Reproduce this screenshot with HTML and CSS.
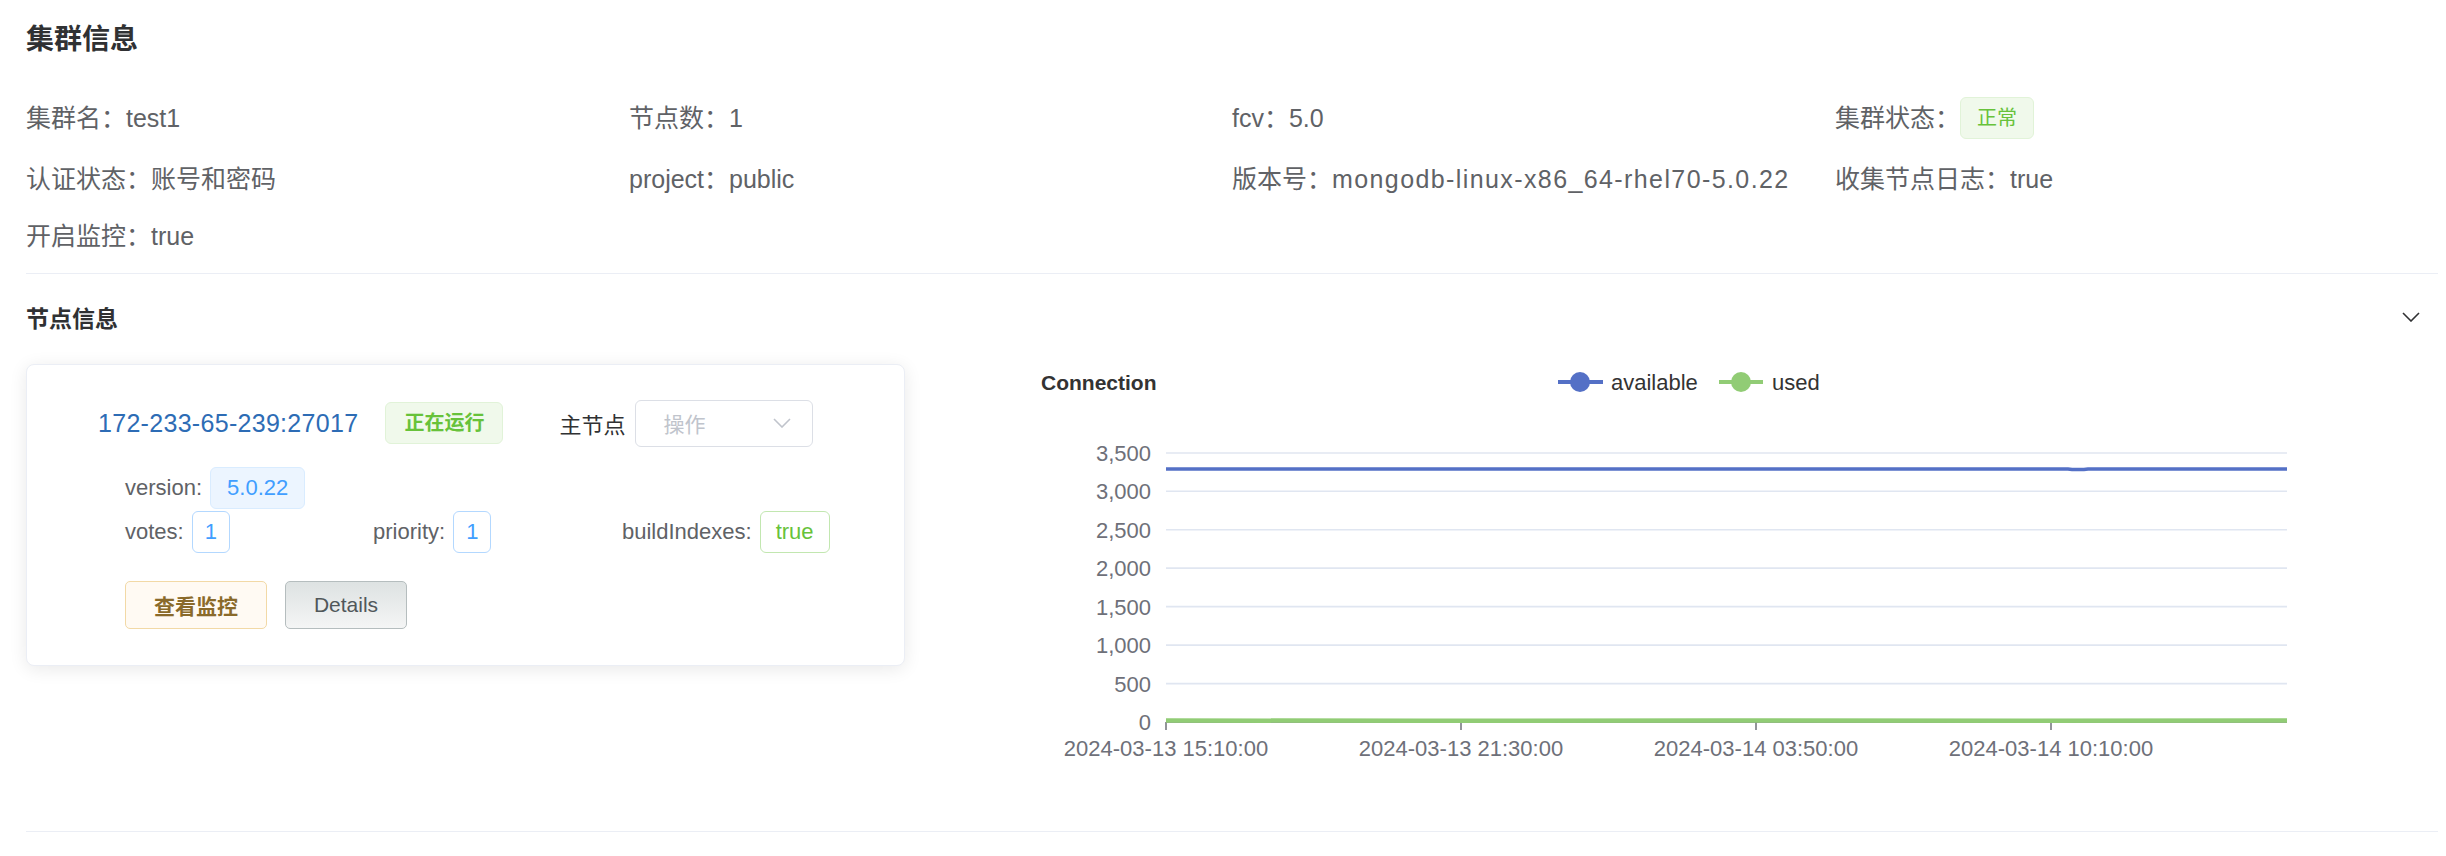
FILE: index.html
```html
<!DOCTYPE html>
<html lang="zh-CN">
<head>
<meta charset="utf-8">
<title>集群信息</title>
<link rel="stylesheet" href="styles.css">
</head>
<body>
<div class="page">
  <section class="cluster">
    <h2 class="title">集群信息</h2>
    <div class="info-grid">
      <div class="item"><span class="label">集群名：</span><span class="value">test1</span></div>
      <div class="item"><span class="label">节点数：</span><span class="value">1</span></div>
      <div class="item"><span class="label">fcv：</span><span class="value">5.0</span></div>
      <div class="item"><span class="label">集群状态：</span><span class="tag tag-success">正常</span></div>
      <div class="item"><span class="label">认证状态：</span><span class="value">账号和密码</span></div>
      <div class="item"><span class="label">project：</span><span class="value">public</span></div>
      <div class="item"><span class="label">版本号：</span><span class="value value-wide">mongodb-linux-x86_64-rhel70-5.0.22</span></div>
      <div class="item"><span class="label">收集节点日志：</span><span class="value">true</span></div>
      <div class="item"><span class="label">开启监控：</span><span class="value">true</span></div>
    </div>
  </section>

  <section class="nodes">
    <div class="collapse-header">
      <span class="collapse-title">节点信息</span>
      <svg class="collapse-arrow" width="18" height="10" viewBox="0 0 18 10"><path d="M1 1 L9 9 L17 1" fill="none" stroke="#303133" stroke-width="1.6"/></svg>
    </div>
    <div class="collapse-body">
      <div class="node-card">
        <div class="node-head">
          <a class="node-host">172-233-65-239:27017</a>
          <span class="tag tag-success tag-bold">正在运行</span>
          <span class="node-role">主节点</span>
          <div class="select">
            <span class="select-placeholder">操作</span>
            <svg class="select-arrow" width="18" height="10" viewBox="0 0 18 10"><path d="M1 1 L9 9 L17 1" fill="none" stroke="#c0c4cc" stroke-width="1.6"/></svg>
          </div>
        </div>
        <div class="node-details">
          <div class="detail-row">
            <span class="d-label">version:</span><span class="dtag dtag-light">5.0.22</span>
          </div>
          <div class="detail-row detail-cols">
            <div class="d-item"><span class="d-label">votes:</span><span class="dtag dtag-plain">1</span></div>
            <div class="d-item"><span class="d-label">priority:</span><span class="dtag dtag-plain">1</span></div>
            <div class="d-item"><span class="d-label">buildIndexes:</span><span class="dtag dtag-green">true</span></div>
          </div>
          <div class="btn-row">
            <button class="btn btn-warn">查看监控</button>
            <button class="btn btn-details">Details</button>
          </div>
        </div>
      </div>

      <div class="chart">
        <svg class="chart-svg" width="1300" height="420" viewBox="0 0 1300 420">
          <text x="21" y="30" class="c-title">Connection</text>
          <line x1="538" y1="22" x2="583" y2="22" stroke="#5470c6" stroke-width="4"/>
          <circle cx="560" cy="22" r="10" fill="#5470c6"/>
          <text x="591" y="30" class="c-legend">available</text>
          <line x1="699" y1="22" x2="743" y2="22" stroke="#91cc75" stroke-width="4"/>
          <circle cx="721" cy="22" r="10" fill="#91cc75"/>
          <text x="752" y="30" class="c-legend">used</text>

          <g stroke="#e0e6f1" stroke-width="1.6">
            <line x1="146" y1="93" x2="1267" y2="93"/>
            <line x1="146" y1="131.3" x2="1267" y2="131.3"/>
            <line x1="146" y1="169.7" x2="1267" y2="169.7"/>
            <line x1="146" y1="208.1" x2="1267" y2="208.1"/>
            <line x1="146" y1="246.6" x2="1267" y2="246.6"/>
            <line x1="146" y1="285.1" x2="1267" y2="285.1"/>
            <line x1="146" y1="323.6" x2="1267" y2="323.6"/>
          </g>
          <g class="c-axis" text-anchor="end">
            <text x="131" y="101">3,500</text>
            <text x="131" y="139">3,000</text>
            <text x="131" y="178">2,500</text>
            <text x="131" y="216">2,000</text>
            <text x="131" y="255">1,500</text>
            <text x="131" y="293">1,000</text>
            <text x="131" y="332">500</text>
            <text x="131" y="370">0</text>
          </g>
          <line x1="146" y1="362" x2="1267" y2="362" stroke="#6e7079" stroke-width="1.5"/>
          <g stroke="#6e7079" stroke-width="1.5">
            <line x1="146" y1="362" x2="146" y2="370"/>
            <line x1="441" y1="362" x2="441" y2="370"/>
            <line x1="736" y1="362" x2="736" y2="370"/>
            <line x1="1031" y1="362" x2="1031" y2="370"/>
          </g>
          <polyline points="146,109 1048,109 1052,109.6 1064,109.6 1068,109 1267,109" fill="none" stroke="#5470c6" stroke-width="3.5"/>
          <polyline points="146,360.5 400,360.8 700,360.4 1000,360.7 1267,360.5" fill="none" stroke="#91cc75" stroke-width="4.5"/>
          <g class="c-axis" text-anchor="middle">
            <text x="146" y="396">2024-03-13 15:10:00</text>
            <text x="441" y="396">2024-03-13 21:30:00</text>
            <text x="736" y="396">2024-03-14 03:50:00</text>
            <text x="1031" y="396">2024-03-14 10:10:00</text>
          </g>
        </svg>
      </div>
    </div>
  </section>
</div>
</body>
</html>
```

FILE: styles.css
```css
* { box-sizing: border-box; }

body {
  margin: 0;
  background: #ffffff;
  color: #606266;
  font-family: "Liberation Sans", "Noto Sans CJK SC", sans-serif;
}

.page {
  padding: 0 8px 0 26px;
}

/* ---------- cluster info ---------- */
.title {
  margin: 0;
  padding-top: 20px;
  font-size: 28px;
  line-height: 40px;
  font-weight: 700;
  color: #303133;
}

.info-grid {
  display: grid;
  grid-template-columns: repeat(4, 1fr);
  row-gap: 23px;
  margin-top: 37px;
  padding-bottom: 20px;
  border-bottom: 1px solid #ebeef5;
}

.item {
  display: flex;
  align-items: center;
  min-height: 34px;
  font-size: 25px;
  line-height: 34px;
  color: #606266;
  white-space: nowrap;
}

.value-wide {
  letter-spacing: 1.4px;
}

.tag {
  display: inline-flex;
  align-items: center;
  height: 42px;
  padding: 0 16px;
  border: 1px solid;
  border-radius: 6px;
  font-size: 20px;
  line-height: 1;
}

.tag-success {
  background: #f0f9eb;
  border-color: #e1f3d8;
  color: #67c23a;
}

.tag-bold {
  font-weight: 700;
  padding: 0 18px;
}

/* ---------- nodes collapse ---------- */
.nodes {
  border-bottom: 1px solid #ebeef5;
}

.collapse-header {
  display: flex;
  align-items: center;
  justify-content: space-between;
  height: 86px;
  padding-right: 18px;
}

.collapse-title {
  font-size: 23px;
  font-weight: 700;
  color: #303133;
}

.collapse-arrow { display: block; }

.collapse-body {
  display: flex;
  align-items: flex-start;
  padding-bottom: 51px;
}

.node-card {
  width: 879px;
  margin-top: 4px;
  border: 1px solid #ebeef5;
  border-radius: 8px;
  background: #fff;
  box-shadow: 0 3px 18px rgba(0, 0, 0, 0.09);
  padding: 35px 0 36px 71px;
}

.node-head {
  display: flex;
  align-items: center;
  height: 46px;
}

.node-host {
  font-size: 25px;
  letter-spacing: 0.3px;
  color: #2d6cb5;
  cursor: pointer;
  margin-right: 27px;
}

.node-role {
  margin-left: 56px;
  margin-right: 10px;
  font-size: 22px;
  color: #303133;
}

.select {
  display: flex;
  align-items: center;
  justify-content: space-between;
  width: 178px;
  height: 47px;
  padding: 0 21px 0 27px;
  border: 1px solid #dcdfe6;
  border-radius: 6px;
}

.select-placeholder {
  font-size: 21px;
  color: #c0c4cc;
}

.select-arrow { display: block; }

.node-details {
  margin-left: 27px;
}

.detail-row {
  display: flex;
  align-items: center;
  font-size: 22px;
  color: #606266;
}

.detail-row:first-child {
  margin-top: 21px;
}

.detail-cols {
  display: grid;
  grid-template-columns: 248px 249px 1fr;
  margin-top: 2px;
}

.d-item {
  display: flex;
  align-items: center;
}

.d-label {
  margin-right: 8px;
}

.dtag {
  display: inline-flex;
  align-items: center;
  height: 42px;
  border: 1px solid;
  border-radius: 6px;
  font-size: 22px;
  line-height: 1;
}

.dtag-light {
  padding: 0 16px;
  background: #ecf5ff;
  border-color: #d9ecff;
  color: #409eff;
}

.dtag-plain {
  padding: 0 12px;
  background: #fff;
  border-color: #b3d8ff;
  color: #409eff;
}

.dtag-green {
  padding: 0 15px;
  background: #fff;
  border-color: #c2e7b0;
  color: #67c23a;
}

.btn-row {
  display: flex;
  gap: 18px;
  margin-top: 28px;
}

.btn {
  height: 48px;
  border: 1px solid;
  border-radius: 5px;
  font-family: "Liberation Sans", "Noto Sans CJK SC", sans-serif;
  font-size: 21px;
  padding: 0;
  cursor: pointer;
}

.btn-warn {
  width: 142px;
  background: #fffaf3;
  border-color: #f2d9a6;
  color: #8a6a2a;
  font-weight: 700;
}

.btn-details {
  width: 122px;
  background: linear-gradient(#dde2e2, #f4f5f5);
  border-color: #b5bdbe;
  color: #51575a;
}

/* ---------- chart ---------- */
.chart {
  margin-left: 115px;
}

.chart-svg { display: block; }

.c-title {
  font-family: "Liberation Sans", sans-serif;
  font-size: 21px;
  font-weight: 700;
  fill: #333333;
}

.c-legend {
  font-family: "Liberation Sans", sans-serif;
  font-size: 22px;
  fill: #333333;
}

.c-axis {
  font-family: "Liberation Sans", sans-serif;
  font-size: 22px;
  fill: #6e7079;
}
```
